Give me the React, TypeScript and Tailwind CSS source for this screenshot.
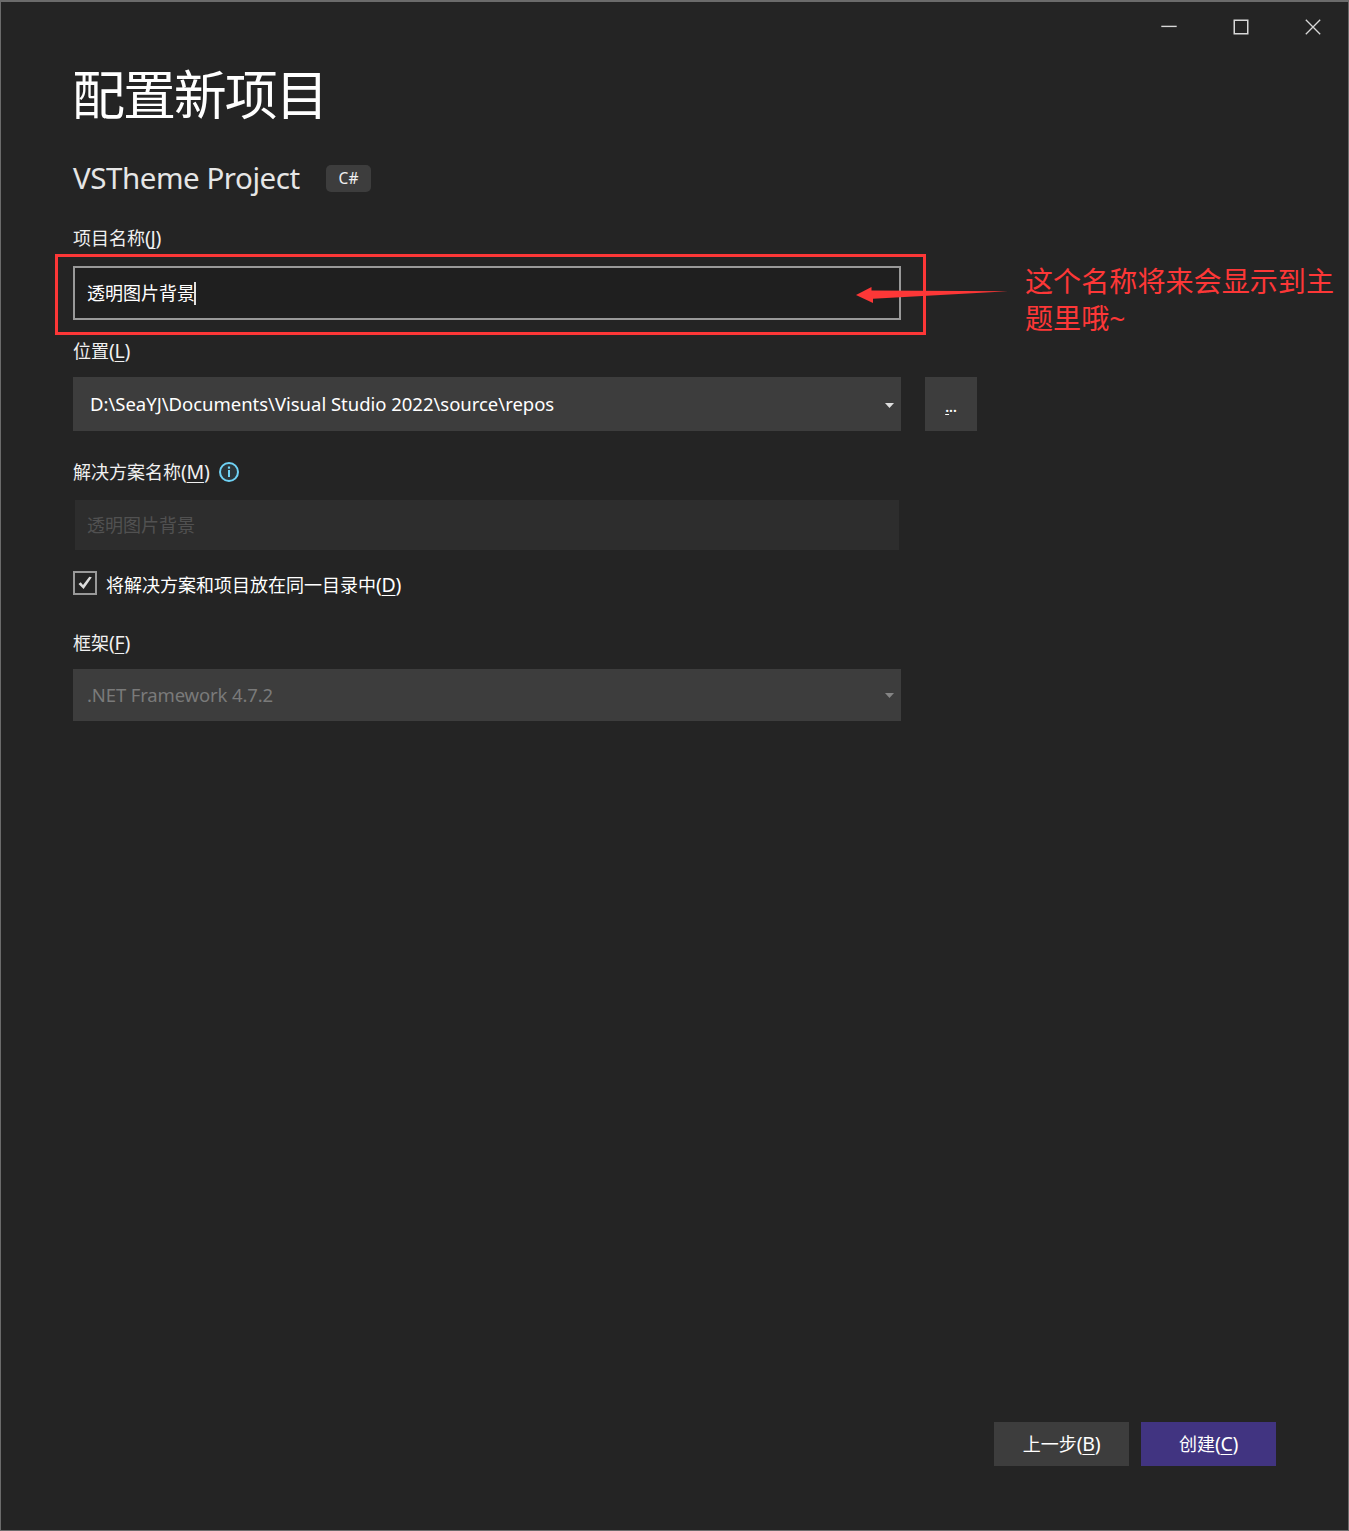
import type { ReactNode } from 'react';

function Key({ children }: { children: ReactNode }) {
  return (
    <span className="text-[19.5px] leading-none tracking-[-0.3px]">
      (<span className="underline decoration-1 underline-offset-[3px] [text-decoration-skip-ink:none]">{children}</span>)
    </span>
  );
}

function Caret({ className }: { className: string }) {
  return (
    <svg className={className} width="9" height="5" viewBox="0 0 9 5">
      <path d="M0 0h9L4.5 5z" fill="currentColor" />
    </svg>
  );
}

function TitleBar() {
  return (
    <div className="-mr-px flex h-[50px] justify-end text-[#d8d8d8]">
      <div className="flex w-[72px] items-center justify-center">
        <svg width="16" height="16" viewBox="0 0 16 16">
          <path d="M0.3 7.4h15.4" stroke="currentColor" strokeWidth="1.4" />
        </svg>
      </div>
      <div className="flex w-[72px] items-center justify-center">
        <svg width="16" height="16" viewBox="0 0 16 16" fill="none">
          <rect x="1.25" y="1.25" width="13.5" height="13.5" stroke="currentColor" strokeWidth="1.5" />
        </svg>
      </div>
      <div className="flex w-[72px] items-center justify-center">
        <svg width="16" height="16" viewBox="0 0 16 16">
          <path d="M0.8 0.8L15.2 15.2M15.2 0.8L0.8 15.2" stroke="currentColor" strokeWidth="1.3" />
        </svg>
      </div>
    </div>
  );
}

export default function App() {
  return (
    <div className="flex h-[1531px] w-[1349px] flex-col overflow-hidden border border-t-2 border-[#6b6b6b] bg-[#242424] font-['Noto_Sans','Noto_Sans_CJK_SC',sans-serif] text-[18px] text-[#f0f0f0]">
      <TitleBar />
      <main className="relative flex flex-1 flex-col items-start pl-[72px]">
        <h1 className="-ml-px mt-[7px] h-[71px] text-[53px] leading-[72px] tracking-[-2.1px] whitespace-nowrap text-white">配置新项目</h1>
        <div className="mt-[28px] flex h-[40px] items-center">
          <h2 className="w-[253px] text-[29.5px] leading-[40px] tracking-[-0.45px] whitespace-nowrap text-[#e6e6e6]">VSTheme Project</h2>
          <span className="flex h-[27px] w-[45px] items-center justify-center rounded-[5px] bg-[#3d3d3d] pt-px text-[15.5px]">C#</span>
        </div>

        <label className="mt-[26px] h-[28px] leading-[28px] whitespace-nowrap">项目名称<Key>J</Key></label>
        <div className="-ml-[18px] mt-[2px] flex h-[81px] w-[871px] items-start border-3 border-[#fd3737] pl-[15px] pt-[9px]">
          <div className="flex h-[54px] w-[828px] items-center border-2 border-[#999999] bg-[#1f1f1f] pl-[12px] whitespace-nowrap text-white">
            <span>透明图片背景</span>
            <span className="-ml-px h-[23px] w-[2px] bg-[#e0e0e0]" />
          </div>
        </div>
        <svg className="absolute left-[855px] top-[233px]" width="152" height="20" viewBox="0 0 152 20">
          <path d="M0 10L15.5 2V5.5L152 6.2L17 13.7V18z" fill="#fd3737" />
        </svg>
        <p className="absolute left-[1024px] top-[211px] w-[320px] text-[28.1px] leading-[37px] text-[#fd3737]">这个名称将来会显示到主题里哦~</p>

        <label className="mt-[2px] h-[28px] leading-[28px] whitespace-nowrap">位置<Key>L</Key></label>
        <div className="mt-[12px] flex gap-[24px]">
          <div className="flex h-[54px] w-[828px] items-center justify-between bg-[#3d3d3d] pl-[17px] pr-[7px] text-white">
            <span className="text-[18.5px] tracking-[-0.02px] whitespace-nowrap">D:\SeaYJ\Documents\Visual Studio 2022\source\repos</span>
            <Caret className="mt-[2px] text-[#dedede]" />
          </div>
          <button className="flex h-[54px] w-[52px] items-center justify-center bg-[#3d3d3d] pt-[4px] text-[14px] font-semibold text-white">
            <span><span className="underline decoration-1 underline-offset-[2px]">.</span>..</span>
          </button>
        </div>

        <div className="mt-[27px] flex h-[28px] items-center">
          <label className="w-[146px] leading-[28px] whitespace-nowrap">解决方案名称<Key>M</Key></label>
          <svg width="20" height="20" viewBox="0 0 20 20" fill="none">
            <circle cx="10" cy="10" r="9" fill="#6fd2f5" fillOpacity="0.1" stroke="#6fd2f5" strokeWidth="2" />
            <path d="M10 8V15" stroke="#6fd2f5" strokeWidth="2" />
            <path d="M10 4.5V6.7" stroke="#6fd2f5" strokeWidth="2.2" />
          </svg>
        </div>
        <div className="ml-[2px] mt-[14px] flex h-[50px] w-[824px] items-center bg-[#2d2d2d] pl-[12px] text-[#515151]">透明图片背景</div>

        <div className="mt-[21px] flex h-[24px] items-center gap-[9px]">
          <span className="flex size-[24px] items-center justify-center border-2 border-[#999999]">
            <svg width="14" height="14" viewBox="0 0 14 14">
              <path d="M0.5 8.1L2.7 6.3L5 9L11.3 0.8L13.8 1.3L5.6 13z" fill="#dcdcdc" />
            </svg>
          </span>
          <label className="mt-[4px] whitespace-nowrap text-white">将解决方案和项目放在同一目录中<Key>D</Key></label>
        </div>

        <label className="mt-[34px] h-[28px] leading-[28px] whitespace-nowrap">框架<Key>F</Key></label>
        <div className="mt-[12px] flex h-[52px] w-[828px] items-center justify-between bg-[#3d3d3d] pl-[14px] pr-[7px] text-[#7a7a7a]">
          <span className="text-[18.5px] tracking-[-0.14px] whitespace-nowrap">.NET Framework 4.7.2</span>
          <Caret className="text-[#858585]" />
        </div>

        <div className="mb-[64px] mr-[72px] mt-auto flex gap-[12px] self-end text-white">
          <button className="h-[44px] w-[135px] bg-[#3d3d3d]">上一步<Key>B</Key></button>
          <button className="h-[44px] w-[135px] bg-[#413481]">创建<Key>C</Key></button>
        </div>
      </main>
    </div>
  );
}
